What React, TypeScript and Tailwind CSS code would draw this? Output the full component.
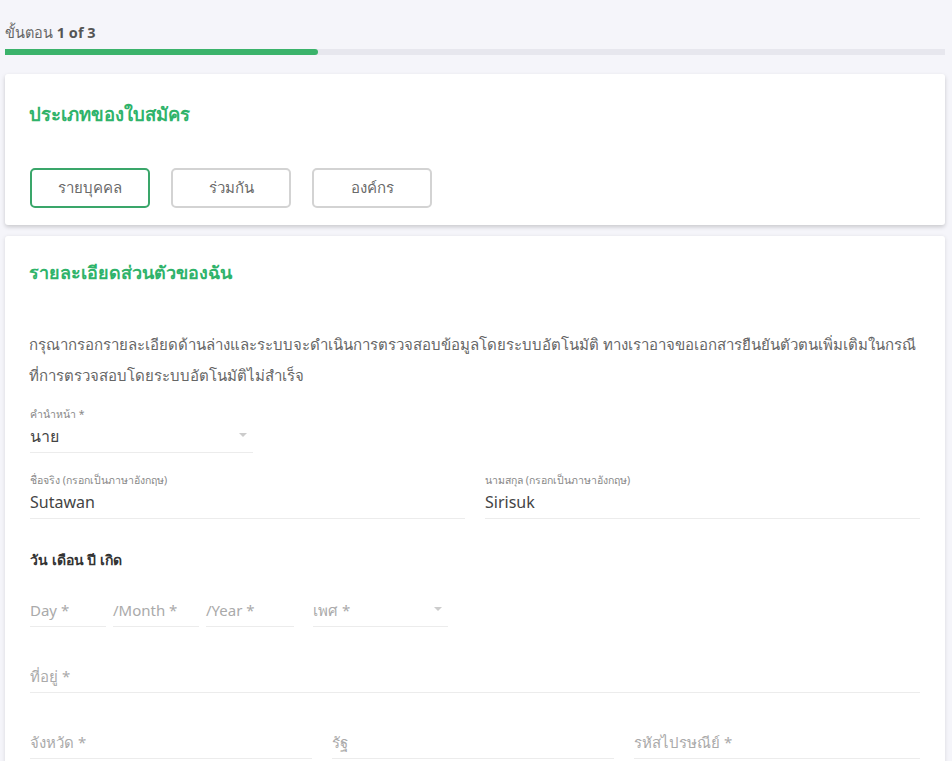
const font = { fontFamily: '"Noto Sans", "Open Sans", sans-serif' };

function Field({ label, value, placeholder, className = "", select = false }: { label?: string; value?: string; placeholder?: string; className?: string; select?: boolean }) {
  return (
    <div className={`flex flex-col ${className}`}>
      {label && <span className="text-[10.5px] leading-[14px] text-[#888]">{label}</span>}
      <div className="relative flex h-[32px] items-center border-b border-[#ececec]">
        {value ? (
          <span className="text-[16px] text-[#444]">{value}</span>
        ) : (
          <span className="text-[15px] text-[#aaa]">{placeholder}</span>
        )}
        {select && <span className="absolute right-[6px] top-[12px] h-0 w-0 border-x-[4px] border-t-[4px] border-x-transparent border-t-[#ccc]" />}
      </div>
    </div>
  );
}

const TYPES = ["รายบุคคล", "ร่วมกัน", "องค์กร"];

export default function App() {
  return (
    <div className="min-h-screen overflow-hidden bg-[#f5f5fa] pl-[5px] pr-[7px] pt-[22px]" style={font}>
      <div className="text-[14.5px] text-[#666]">
        ขั้นตอน <span className="font-bold text-[#555]">1 of 3</span>
      </div>
      <div className="mt-[5px] h-[6px] w-full bg-[#e7e7ee]">
        <div className="h-full w-[313px] rounded-r-sm bg-[#3bb36b]" />
      </div>

      <div className="mt-[19px] rounded-[3px] bg-white px-[24px] pb-[17px] pt-[26px] shadow-[0_2px_4px_rgba(0,0,0,0.18)]">
        <h2 className="text-[18.5px] font-bold text-[#2fb36a]">ประเภทของใบสมัคร</h2>
        <div className="mt-[40px] flex gap-[21px] pl-[1px]">
          {TYPES.map((t, i) => (
            <button
              key={t}
              className={`h-[40px] w-[120px] rounded-[5px] text-[15px] text-[#6a6a6a] ${i === 0 ? "border-2 border-[#3aa66a]" : "border-2 border-[#d3d3d3]"}`}
            >
              {t}
            </button>
          ))}
        </div>
      </div>

      <div className="mt-[11px] rounded-t-[3px] bg-white px-[24px] pt-[23px] pb-[40px] shadow-[0_1px_4px_rgba(0,0,0,0.12)]">
        <h2 className="text-[18px] font-bold text-[#2fb36a]">รายละเอียดส่วนตัวของฉัน</h2>
        <p className="mt-[43px] text-[15px] leading-[31px] text-[#666]">
          กรุณากรอกรายละเอียดด้านล่างและระบบจะดำเนินการตรวจสอบข้อมูลโดยระบบอัตโนมัติ ทางเราอาจขอเอกสารยืนยันตัวตนเพิ่มเติมในกรณี
          <br />
          ที่การตรวจสอบโดยระบบอัตโนมัติไม่สำเร็จ
        </p>

        <div className="mt-[16px] pl-[1px] pr-[1px]">
          <Field className="w-[223px]" label="คำนำหน้า *" value="นาย" select />
          <div className="mt-[20px] flex gap-[20px]">
            <Field className="flex-1" label="ชื่อจริง (กรอกเป็นภาษาอังกฤษ)" value="Sutawan" />
            <Field className="flex-1" label="นามสกุล (กรอกเป็นภาษาอังกฤษ)" value="Sirisuk" />
          </div>

          <div className="mt-[30px] text-[14px] font-bold text-[#333]">วัน เดือน ปี เกิด</div>

          <div className="mt-[25px] flex items-end">
            <Field className="w-[76px]" placeholder="Day *" />
            <Field className="ml-[7px] w-[86px]" placeholder="/Month *" />
            <Field className="ml-[7px] w-[88px]" placeholder="/Year *" />
            <Field className="ml-[19px] w-[135px]" placeholder="เพศ *" select />
          </div>

          <Field className="mt-[34px]" placeholder="ที่อยู่ *" />

          <div className="mt-[34px] flex gap-[20px]">
            <Field className="w-[282px]" placeholder="จังหวัด *" />
            <Field className="w-[282px]" placeholder="รัฐ" />
            <Field className="flex-1" placeholder="รหัสไปรษณีย์ *" />
          </div>
        </div>
      </div>
    </div>
  );
}
